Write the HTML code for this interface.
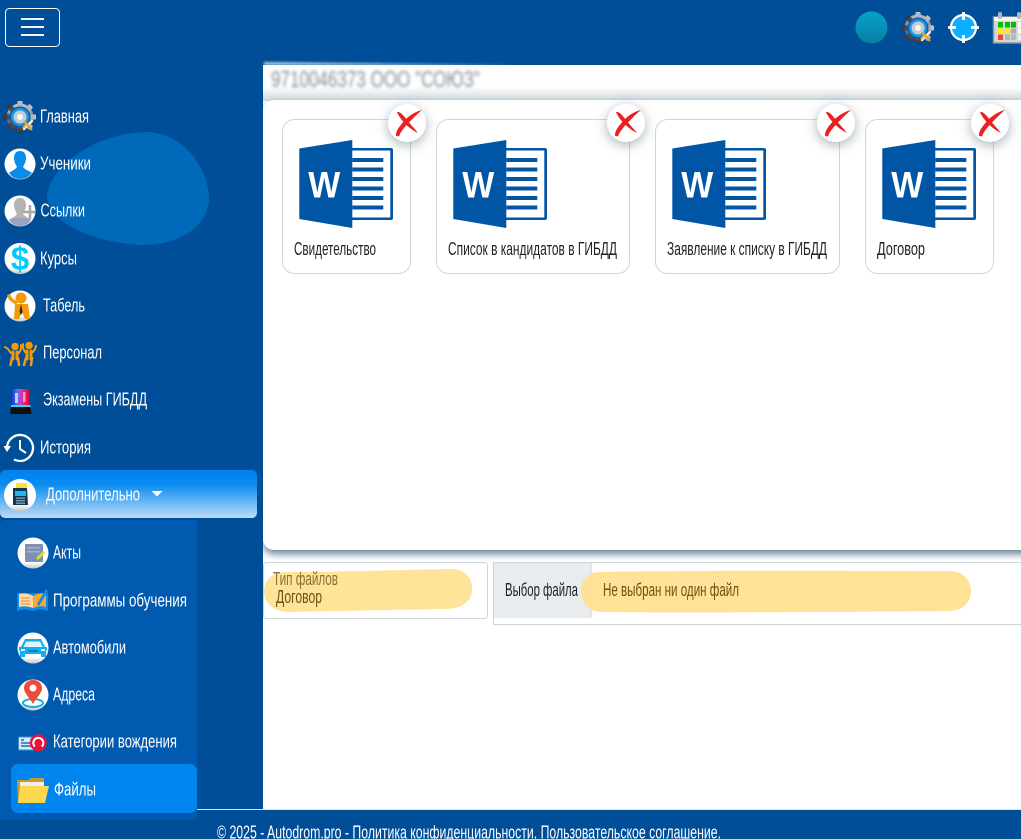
<!DOCTYPE html>
<html lang="ru">
<head>
<meta charset="utf-8">
<title>Файлы</title>
<style>
html,body{margin:0;padding:0;width:1021px;height:839px;overflow:hidden;background:#004e98}
svg{display:block}
text{font-family:"Liberation Sans","DejaVu Sans",sans-serif;font-size:18px}
.w{fill:#fff}
.k{fill:#1d2125}
</style>
</head>
<body>
<svg xmlns="http://www.w3.org/2000/svg" width="1021" height="839" viewBox="0 0 1021 839">
<defs>
<linearGradient id="act" x1="0" y1="0" x2="0" y2="1"><stop offset="0" stop-color="#0080ee"/><stop offset=".3" stop-color="#0a8cf0"/><stop offset="1" stop-color="#bcdcf6"/></linearGradient>
<linearGradient id="teal" x1="0" y1="0" x2="0" y2="1"><stop offset="0" stop-color="#0aa0c8"/><stop offset="1" stop-color="#0680a0"/></linearGradient>
<linearGradient id="hd" x1="0" y1="0" x2="0" y2="1"><stop offset="0" stop-color="#fff"/><stop offset=".6" stop-color="#fff"/><stop offset="1" stop-color="#cfd8de"/></linearGradient>
<linearGradient id="gear" x1="0" y1="0" x2="0" y2="1"><stop offset="0" stop-color="#c4c6c8"/><stop offset="1" stop-color="#33373b"/></linearGradient>
<linearGradient id="orb" x1="0" y1="0" x2="0" y2="1"><stop offset="0" stop-color="#fff"/><stop offset=".8" stop-color="#fff"/><stop offset="1" stop-color="#c7c7c7"/></linearGradient>
<linearGradient id="siren" x1="0" y1="0" x2="1" y2="0"><stop offset="0" stop-color="#1028c8"/><stop offset=".3" stop-color="#5070ff"/><stop offset=".5" stop-color="#c040c0"/><stop offset=".8" stop-color="#f01050"/><stop offset="1" stop-color="#b00838"/></linearGradient>
<filter id="bl" x="-20%" y="-80%" width="140%" height="260%"><feGaussianBlur stdDeviation="1.5"/></filter>
<filter id="bl2" x="-20%" y="-200%" width="140%" height="500%"><feGaussianBlur stdDeviation="1"/></filter>
<filter id="sh" x="-60%" y="-60%" width="220%" height="220%"><feDropShadow dx="0" dy="3" stdDeviation="6" flood-color="#5a7080" flood-opacity=".55"/></filter>
<filter id="psh" x="-5%" y="-5%" width="110%" height="112%"><feDropShadow dx="0" dy="4" stdDeviation="4" flood-color="#4d6c82" flood-opacity=".85"/></filter>
<clipPath id="mainclip"><rect x="263" y="65" width="758" height="744"/></clipPath>

<g id="gearI">
  <g fill="url(#gear)">
    <circle r="13.500"/>
    <rect x="-2.600" y="-16" width="5.200" height="32" rx="1"/>
    <rect x="-2.600" y="-16" width="5.200" height="32" rx="1" transform="rotate(45)"/>
    <rect x="-2.600" y="-16" width="5.200" height="32" rx="1" transform="rotate(90)"/>
    <rect x="-2.600" y="-16" width="5.200" height="32" rx="1" transform="rotate(135)"/>
  </g>
  <circle r="10.500" fill="#0a5cb0"/>
  <circle r="9" fill="#1a98e4"/>
  <circle r="6.500" fill="#c6ccd0"/>
  <circle r="3" fill="#f6f6f6"/>
  <path d="M4 12 L12 4" stroke="#eeeeee" stroke-width="2.400" stroke-linecap="round"/>
  <path d="M4 4 L12 13" stroke="#f0a010" stroke-width="2.200"/>
  <path d="M3 11 L7 7" stroke="#f4b030" stroke-width="2"/>
</g>

<g id="wordI">
  <path d="M52.500 8 H91.500 Q93.700 8 93.700 10 V78 Q93.700 80 91.500 80 H52.500 V77.500 H91 V10.500 H52.500 Z" fill="#0056a4"/>
  <rect x="53" y="18" width="31" height="4" fill="#0056a4"/>
  <rect x="53" y="27.500" width="31" height="4" fill="#0056a4"/>
  <rect x="53" y="37" width="31" height="4" fill="#0056a4"/>
  <rect x="53" y="46.500" width="31" height="4" fill="#0056a4"/>
  <rect x="53" y="56" width="31" height="4" fill="#0056a4"/>
  <rect x="53" y="65.500" width="31" height="4" fill="#0056a4"/>
  <path d="M0 8.500 L53 0 V88 L0 79 Z" fill="#0056a4"/>
  <text x="9" y="57.500" textLength="32" lengthAdjust="spacingAndGlyphs" style="font-size:37px;font-weight:bold;fill:#fff">W</text>
</g>

<g id="closeI">
  <circle r="19" fill="#fff" filter="url(#sh)"/>
  <path d="M-10 -11 C-7 -12 -3 -7 0 -3 C3 1 8 6 11 10 C6 7.500 2 4.500 -1 1.500 C-4 -1.500 -8 -6 -10 -11 Z" fill="#e82020"/>
  <path d="M15 -13 C8 -11.500 1 -6.500 -3 -2 C-7 3 -11 7 -11 12 C-11 14 -7.500 14 -7 11 C-5 7 -1 2.500 2 -0.500 C6 -4.500 10 -9 15 -13 Z" fill="#ec2020"/>
</g>
</defs>

<!-- base -->
<rect width="1021" height="839" fill="#004e98"/>

<!-- blob -->
<path d="M47 197 C48 170 90 134 145 132 C185 132 209 170 209 200 C206 233 170 246 140 245 C105 243 50 228 47 197 Z" fill="#0069b9"/>

<!-- main white -->
<rect x="263" y="65" width="758" height="744" fill="#fff"/>
<rect x="263" y="65" width="758" height="36" fill="url(#hd)"/>
<path d="M264 65 H520 L264 62 Z" fill="#dfeaf2" opacity=".8" filter="url(#bl2)"/>
<text x="271" y="87" textLength="209" lengthAdjust="spacingAndGlyphs" filter="url(#bl)" style="font-size:23px;fill:#848c92">9710046373 ООО "СОЮЗ"</text>
<g clip-path="url(#mainclip)">
<rect x="263" y="100" width="780" height="450" rx="11" fill="#fff" filter="url(#psh)"/>
</g>

<!-- cards -->
<g fill="#fff" stroke="#d2d5d8" stroke-width="1">
  <rect x="282.500" y="119.500" width="128" height="154" rx="12"/>
  <rect x="436.500" y="119.500" width="193" height="154" rx="12"/>
  <rect x="655.500" y="119.500" width="184" height="154" rx="12"/>
  <rect x="865.500" y="119.500" width="128" height="154" rx="12"/>
</g>
<use href="#wordI" x="299.300" y="140"/>
<use href="#wordI" x="453.300" y="140"/>
<use href="#wordI" x="672.300" y="140"/>
<use href="#wordI" x="882.300" y="140"/>
<use href="#closeI" x="407" y="123"/>
<use href="#closeI" x="626" y="123"/>
<use href="#closeI" x="836" y="123"/>
<use href="#closeI" x="990" y="123"/>
<text class="k" x="294" y="255" textLength="82" lengthAdjust="spacingAndGlyphs">Свидетельство</text>
<text class="k" x="448" y="255" textLength="169" lengthAdjust="spacingAndGlyphs">Список в кандидатов в ГИБДД</text>
<text class="k" x="667" y="255" textLength="160" lengthAdjust="spacingAndGlyphs">Заявление к списку в ГИБДД</text>
<text class="k" x="877" y="255" textLength="48" lengthAdjust="spacingAndGlyphs">Договор</text>

<!-- form -->
<rect x="263.500" y="562.500" width="224" height="56" rx="3" fill="#fff" stroke="#ced4da"/>
<rect x="493.500" y="562.500" width="540" height="62" fill="#fff" stroke="#ced4da"/>
<rect x="494" y="563" width="97" height="55" fill="#e9ecef"/>
<rect x="590.500" y="563" width="1" height="55" fill="#ced4da"/>
<path d="M284 572 C340 572 400 570 450 569 C466 569 473 579 472 590 C471 602 462 609 445 609 C390 610 340 611 290 612 C272 612 264 602 264 592 C264 580 272 573 284 572 Z" fill="#ffe398"/>
<path d="M600 572 C700 570 850 571 950 571 C964 571 971 581 971 591 C971 603 962 611 948 611 C850 612 700 613 602 612 C588 612 581 602 581 591 C581 580 588 572 600 572 Z" fill="#ffdf8e" fill-opacity=".92"/>
<text x="273" y="585" textLength="65" lengthAdjust="spacingAndGlyphs" fill="#8a7033">Тип файлов</text>
<text x="276" y="603" textLength="46" lengthAdjust="spacingAndGlyphs" fill="#6e5412">Договор</text>
<text class="k" x="505" y="596" textLength="73" lengthAdjust="spacingAndGlyphs">Выбор файла</text>
<text x="603" y="596" textLength="136" lengthAdjust="spacingAndGlyphs" fill="#6e5412">Не выбран ни один файл</text>

<!-- top bar -->
<rect x="5.500" y="8.500" width="54" height="38" rx="4" fill="none" stroke="#fff" stroke-width="1"/>
<g fill="#f0f8ff"><rect x="21" y="18" width="23" height="2"/><rect x="21" y="26" width="23" height="2"/><rect x="21" y="34" width="23" height="2"/></g>
<circle cx="871.500" cy="27.500" r="16" fill="url(#teal)"/>
<use href="#gearI" x="918" y="28"/>
<g>
  <circle cx="963.500" cy="27.500" r="12.500" fill="#0ab0ff" stroke="#fff" stroke-width="2.200"/>
  <g stroke="#fff" stroke-width="2.800"><path d="M963.500 12 V20"/><path d="M963.500 35 V43"/><path d="M948 27.500 H956"/><path d="M971 27.500 H979"/></g>
</g>
<g>
  <rect x="993.500" y="17" width="40" height="26" fill="#d4d6d8" stroke="#8f9498" stroke-width="1.500"/>
  <rect x="994" y="17" width="40" height="4" fill="#f4f4f4"/>
  <rect x="998" y="12" width="4" height="7" rx="2" fill="#b4b8bc"/>
  <rect x="1017" y="12" width="4" height="7" rx="2" fill="#b4b8bc"/>
  <rect x="998" y="22" width="5" height="5.500" fill="#00c000"/><rect x="1005" y="22" width="5" height="5.500" fill="#00c000"/><rect x="1011" y="22" width="5" height="5.500" fill="#00c000"/><rect x="1018" y="22" width="3" height="5.500" fill="#fff"/>
  <rect x="998" y="28.500" width="5" height="5" fill="#f8f000"/><rect x="1005" y="28.500" width="5" height="5" fill="#f8f000"/><rect x="1011" y="28.500" width="5" height="5" fill="#b0b0b0"/><rect x="1018" y="28.500" width="3" height="5" fill="#fff"/>
  <rect x="998" y="34.500" width="5" height="5.500" fill="#f04840"/><rect x="1005" y="34.500" width="5" height="5.500" fill="#b8b8b8"/><rect x="1011" y="34.500" width="5" height="5.500" fill="#b8b8b8"/><rect x="1018" y="34.500" width="3" height="5.500" fill="#eee"/>
</g>

<!-- sidebar items -->
<use href="#gearI" x="20" y="117"/>
<text class="w" x="40" y="122.500" textLength="49" lengthAdjust="spacingAndGlyphs">Главная</text>

<circle cx="20" cy="164" r="15.500" fill="url(#orb)"/>
<path d="M20 151 C24 151 26 154 26 158 C26 162 24 165 23 167 C25 170 30 171 32 173 Q27 179 20 179 Q13 179 9 173 C11 171 15 170 17 167 C16 165 14 162 14 158 C14 154 16 151 20 151 Z" fill="#0a8cea"/>
<text class="w" x="40" y="169.500" textLength="51" lengthAdjust="spacingAndGlyphs">Ученики</text>

<circle cx="20" cy="211" r="15.500" fill="url(#orb)"/>
<path d="M20 198 C24 198 26 201 26 205 C26 209 24 212 23 214 C25 217 30 218 31 220 Q27 226 20 226 Q13 226 9 220 C11 218 15 217 17 214 C16 212 14 209 14 205 C14 201 16 198 20 198 Z" fill="#b4b4b4"/>
<path d="M9 220 Q13 226 20 226 Q27 226 31 220 C27 217 13 217 9 220 Z" fill="#98a4c0"/>
<path d="M30 205 V219 M23 212 H35" stroke="#a8a8a8" stroke-width="2.500"/>
<text class="w" x="40.500" y="216.500" textLength="44.500" lengthAdjust="spacingAndGlyphs">Ссылки</text>

<circle cx="20" cy="258.500" r="15.500" fill="url(#orb)"/>
<text x="20" y="270" text-anchor="middle" style="font-size:33px;font-weight:bold;fill:#00cbfb">$</text>
<text class="w" x="40" y="264.500" textLength="37" lengthAdjust="spacingAndGlyphs">Курсы</text>

<circle cx="20" cy="306" r="15.500" fill="url(#orb)"/>
<g fill="#f39a0c">
  <circle cx="21" cy="298" r="5.500"/>
  <path d="M15 304 H28 L30 319 H25 L22 312 L19 319 H14 Z"/>
  <path d="M16 305 L9 300 L7 295 L10 294 L12 298 L18 302 Z"/>
</g>
<path d="M21 304 L22.500 312 L21 315 L19.500 312 Z" fill="#222"/>
<text class="w" x="43" y="311.500" textLength="42" lengthAdjust="spacingAndGlyphs">Табель</text>

<g fill="none" stroke="#f39a0c" stroke-linecap="round">
  <path d="M13 352 V359 M17 352 V359" stroke-width="3"/>
  <path d="M12 358 L10.500 365 M18 358 L19 365" stroke-width="2.500"/>
  <path d="M11 353 L8 349 L5 347" stroke-width="2"/>
  <path d="M19 353 L21 349 L21 345" stroke-width="2"/>
  <path d="M27 351 V359 M31 351 V359" stroke-width="3"/>
  <path d="M26 358 L24 365 M32 358 L31 365" stroke-width="2.500"/>
  <path d="M25 352 L23 348 L23 344" stroke-width="2"/>
  <path d="M33 352 L35 349 L36 346" stroke-width="2"/>
</g>
<circle cx="15" cy="346.500" r="3.800" fill="#f39a0c"/>
<circle cx="29" cy="345.500" r="3.800" fill="#f39a0c"/>
<text class="w" x="43" y="358.500" textLength="59" lengthAdjust="spacingAndGlyphs">Персонал</text>

<g>
  <path d="M14 389 H28 Q29 389 29.300 391 L30.500 407 H11 L12.500 391 Q13 389 14 389 Z" fill="url(#siren)"/>
  <rect x="15" y="393" width="3" height="10" fill="#d8e4ff" opacity=".8"/>
  <rect x="23" y="392" width="2.500" height="10" fill="#ffb0c8" opacity=".8"/>
  <rect x="11" y="405" width="19.500" height="2" fill="#30d8e8"/>
  <path d="M11 407 H30.500 L31.500 414 H10 Z" fill="#101010"/>
</g>
<text class="w" x="43" y="405.500" textLength="104" lengthAdjust="spacingAndGlyphs">Экзамены ГИБДД</text>

<g fill="none" stroke="#fff">
  <path d="M7 448 A13 13 0 1 1 14 459.500" stroke-width="2.300"/>
  <path d="M20 440 V449 L26 453" stroke-width="2"/>
</g>
<path d="M3.500 446 H11 L7 452 Z" fill="#fff"/>
<text class="w" x="40" y="453.500" textLength="51" lengthAdjust="spacingAndGlyphs">История</text>

<!-- active -->
<rect x="0" y="470" width="257" height="48" rx="5" fill="url(#act)"/>
<circle cx="20" cy="495" r="16" fill="url(#orb)"/>
<rect x="16" y="483" width="11" height="5.500" fill="#f5e430"/>
<path d="M13 488 H27 L28 505 H13 Z" fill="#0a3a58"/>
<rect x="15" y="491" width="11" height="5" fill="#20b8e8"/>
<g fill="#8fa5b2"><rect x="16" y="497.500" width="9" height="1.300"/><rect x="16" y="500" width="9" height="1.300"/><rect x="16" y="502.500" width="9" height="1.300"/></g>
<text class="w" x="46" y="500.500" textLength="94" lengthAdjust="spacingAndGlyphs">Дополнительно</text>
<path d="M151.500 491 H162.500 L157 496.500 Z" fill="#fff"/>

<!-- dropdown panel -->
<rect x="0" y="520" width="197" height="300" rx="4" fill="#005bb0"/>
<rect x="11" y="764" width="186" height="49" rx="7" fill="#0084ee"/>

<circle cx="33" cy="553" r="15.500" fill="url(#orb)"/>
<rect x="25" y="544" width="18" height="18" rx="1" fill="#8090b4"/>
<g fill="#a4b0cc"><rect x="27" y="547" width="13" height="1.500"/><rect x="27" y="551" width="13" height="1.500"/></g>
<path d="M36 558 L43 551 L45 553 L38 560 Z" fill="#d8e020"/>
<text class="w" x="53" y="558.500" textLength="28" lengthAdjust="spacingAndGlyphs">Акты</text>

<g>
  <path d="M17 593 H48 V611 Q40 608 33 611 Q25 608 17 611 Z" fill="#0c8cea"/>
  <path d="M19 594 Q26 592 33 596 V608 Q26 605 19 607 Z" fill="#ffd9a8"/>
  <path d="M33 596 Q40 592 46 594 V607 Q40 605 33 608 Z" fill="#f6a830"/>
  <path d="M21 598 H30 M21 601 H30 M21 604 H30" stroke="#e88830" stroke-width="1"/>
  <path d="M37 604 L46 589 L48 591 L39 606 Z" fill="#0c8cea"/>
</g>
<text class="w" x="53" y="606.500" textLength="134" lengthAdjust="spacingAndGlyphs">Программы обучения</text>

<circle cx="33" cy="648" r="15.500" fill="url(#orb)"/>
<path d="M25 639 H41 L45 647 H47 V650 L46 651 V657 H41 V654 H25 V657 H20 V651 L19 650 V647 H21 Z" fill="#10b0f0"/>
<path d="M26 641.500 H40 L42.500 647 H23.500 Z" fill="#e0f6ff"/>
<rect x="28" y="650" width="10" height="2" fill="#0a80c8"/>
<rect x="21" y="649" width="4" height="2" fill="#e0f6ff"/>
<rect x="41" y="649" width="4" height="2" fill="#e0f6ff"/>
<text class="w" x="53" y="653.500" textLength="73" lengthAdjust="spacingAndGlyphs">Автомобили</text>

<circle cx="33" cy="695" r="15.500" fill="url(#orb)"/>
<ellipse cx="33" cy="703" rx="10" ry="4" fill="none" stroke="#18b0e0" stroke-width="2"/>
<path d="M33 704 C29 697 24 693 24 688 C24 683 28 680 33 680 C38 680 42 683 42 688 C42 693 37 697 33 704 Z" fill="#f04a38"/>
<circle cx="33" cy="688" r="3.500" fill="#fff"/>
<text class="w" x="53" y="700.500" textLength="42" lengthAdjust="spacingAndGlyphs">Адреса</text>

<rect x="18.500" y="737" width="15" height="13" rx="1" fill="#d8e8f4" stroke="#3a90d0"/>
<path d="M21 740 H24 M21 743 H31 M21 746 H31" stroke="#1a70b8" stroke-width="1.500"/>
<circle cx="38.300" cy="742.700" r="8.500" fill="#f0103a"/>
<path d="M34.800 746.500 A5 5 0 1 1 41.800 746.500" fill="none" stroke="#fff" stroke-width="2"/>
<text class="w" x="53" y="747.500" textLength="124" lengthAdjust="spacingAndGlyphs">Категории вождения</text>

<path d="M17 782 Q17 780 19 780 H28 L31 778 H44 V803 H18 Z" fill="#c89a28"/>
<rect x="20" y="782" width="24" height="6" fill="#eeeeee"/>
<path d="M20 786 H49 L45 803 H18 Z" fill="#fdd84e"/>
<text class="w" x="54" y="795.500" textLength="42" lengthAdjust="spacingAndGlyphs">Файлы</text>

<!-- footer -->
<rect x="197" y="809" width="824" height="1" fill="#d8e4ee"/>
<text class="w" x="217" y="838.500" textLength="504" lengthAdjust="spacingAndGlyphs">© 2025 - Autodrom.pro - Политика конфиденциальности. Пользовательское соглашение.</text>
</svg>
</body>
</html>
